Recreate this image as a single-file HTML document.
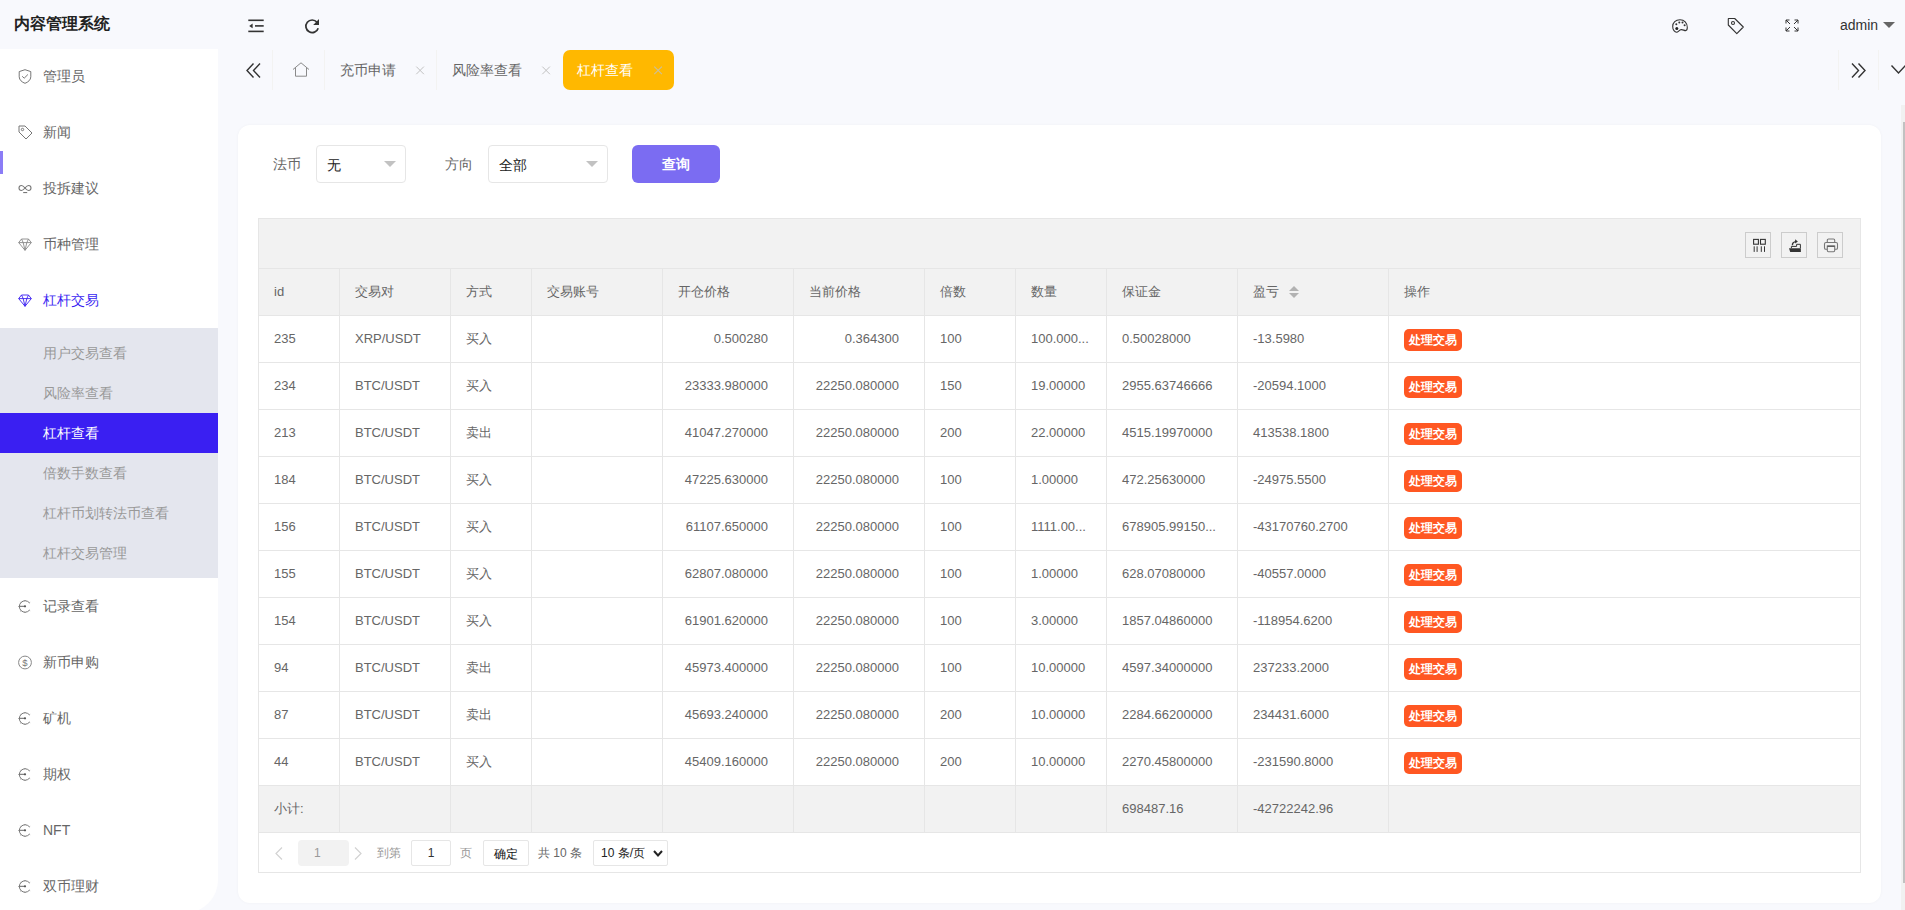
<!DOCTYPE html>
<html><head><meta charset="utf-8">
<style>
*{box-sizing:border-box;margin:0;padding:0}
html,body{width:1905px;height:910px;overflow:hidden}
body{position:relative;background:#f8f9fd;font-family:"Liberation Sans",sans-serif;font-size:14px;color:#333}
.a{position:absolute;white-space:nowrap}
svg{position:absolute;overflow:visible}
.logo{left:14px;top:13px;font-size:16px;font-weight:bold;color:#222;line-height:22px}
.side{left:0;top:49px;width:218px;height:864px;background:#fff;border-bottom-right-radius:33px}
.mi{position:absolute;left:43px;color:#666;font-size:14px;line-height:20px}
.si{position:absolute;left:43px;color:#999;font-size:14px;line-height:20px}
.card{left:238px;top:125px;width:1643px;height:778px;background:#fff;border-radius:12px;box-shadow:0 0 3px rgba(0,0,50,.04)}
.hl{position:absolute;left:258px;width:1603px;height:1px;background:#e6e6e6}
.vl{position:absolute;width:1px;background:#e6e6e6}
.tc{font-size:13px;color:#666;line-height:46px}
.btn{width:58px;height:22px;line-height:22px;background:#ff5722;color:#fff;font-size:12px;font-weight:bold;text-align:center;border-radius:5px}
.tab{position:absolute;top:50px;height:40px;line-height:40px;font-size:14px;color:#666}
.x{position:absolute;top:50px;line-height:40px;font-size:14px;color:#bbb}
.sep{position:absolute;top:50px;width:1px;height:40px;background:#f3f3f2}
.tool{position:absolute;top:232px;width:26px;height:26px;border:1px solid #ccc;background:#f2f2f2}
.pg{font-size:12px;color:#999;line-height:26px}
</style></head><body>
<div class="a logo">内容管理系统</div>

<!-- header icons -->
<svg style="left:248px;top:19px" width="16" height="14" viewBox="0 0 16 14">
 <rect x="0.3" y="0.5" width="15.4" height="1.6" fill="#333"/>
 <rect x="7" y="6.1" width="8.7" height="1.6" fill="#333"/>
 <rect x="0.3" y="11.6" width="15.4" height="1.6" fill="#333"/>
 <path d="M1.2 6.9 L4.6 4.6 L4.6 9.2 Z" fill="#333"/>
</svg>
<svg style="left:304px;top:18px" width="16" height="16" viewBox="0 0 16 16">
 <path d="M14.2 10.2 A6.3 6.3 0 1 1 13 4.2" fill="none" stroke="#333" stroke-width="1.7"/>
 <path d="M15 1 L15 7 L9.2 7 Z" fill="#333"/>
</svg>

<svg style="left:1672px;top:19px" width="16" height="14" viewBox="0 0 16 14">
 <path d="M8 0.8 C3.6 0.8 0.7 3.6 0.7 7.4 C0.7 11 2.8 13.2 4.6 13.2 C6.4 13.2 7 10.7 9.3 10.6 C11.2 10.5 12 11.6 13.6 11.6 C15 11.6 15.3 10.4 15.3 8.6 C15.3 3.8 12.2 0.8 8 0.8 Z" fill="none" stroke="#333" stroke-width="1.1"/>
 <circle cx="4.8" cy="9.6" r="1.5" fill="#222"/>
 <circle cx="4.3" cy="5.3" r="1" fill="#333"/>
 <circle cx="7.3" cy="3.4" r="1" fill="#333"/>
 <circle cx="10.5" cy="3.6" r="1" fill="#333"/>
 <circle cx="12.6" cy="6.3" r="1" fill="#333"/>
</svg>
<svg style="left:1727px;top:17px" width="18" height="18" viewBox="0 0 18 18">
 <path d="M1.5 1.5 H7.7 L16.3 10 L9.8 16.6 L1.3 8 V2 Z" fill="none" stroke="#333" stroke-width="1.1" stroke-linejoin="round"/>
 <circle cx="6" cy="6" r="1.5" fill="none" stroke="#333" stroke-width="1.1"/>
</svg>
<svg style="left:1785px;top:19px" width="14" height="13" viewBox="0 0 14 13">
 <g fill="none" stroke="#333" stroke-width="1">
 <path d="M1 4.5 V1 H4.5 M1 1 L5 5"/>
 <path d="M13 4.5 V1 H9.5 M13 1 L9 5"/>
 <path d="M1 8.5 V12 H4.5 M1 12 L5 8"/>
 <path d="M13 8.5 V12 H9.5 M13 12 L9 8"/>
 </g>
</svg>
<div class="a" style="left:1840px;top:15px;font-size:14px;line-height:20px;color:#333">admin</div>
<div class="a" style="left:1883px;top:22px;width:0;height:0;border-left:6px solid transparent;border-right:6px solid transparent;border-top:6px solid #666"></div>

<!-- sidebar -->
<div class="a side"></div>
<div class="a" style="left:0;top:151px;width:3px;height:23px;background:#8b7cf6"></div>
<div class="mi" style="top:66px">管理员</div>
<div class="mi" style="top:122px">新闻</div>
<div class="mi" style="top:178px">投拆建议</div>
<div class="mi" style="top:234px">币种管理</div>
<div class="mi" style="top:290px;color:#3a1ff2">杠杆交易</div>
<div class="a" style="left:0;top:328px;width:218px;height:250px;background:#e4e6ee"></div>
<div class="a" style="left:0;top:413px;width:218px;height:40px;background:#3a1ff2"></div>
<div class="si" style="top:343px">用户交易查看</div>
<div class="si" style="top:383px">风险率查看</div>
<div class="si" style="top:423px;color:#fff">杠杆查看</div>
<div class="si" style="top:463px">倍数手数查看</div>
<div class="si" style="top:503px">杠杆币划转法币查看</div>
<div class="si" style="top:543px">杠杆交易管理</div>
<div class="mi" style="top:596px">记录查看</div>
<div class="mi" style="top:652px">新币申购</div>
<div class="mi" style="top:708px">矿机</div>
<div class="mi" style="top:764px">期权</div>
<div class="mi" style="top:820px">NFT</div>
<div class="mi" style="top:876px">双币理财</div>
<svg style="left:18px;top:69px" width="14" height="15" viewBox="0 0 14 15">
 <path d="M7 0.7 L12.8 2.6 V7.8 C12.8 11 10 13.2 7 14.3 C4 13.2 1.2 11 1.2 7.8 V2.6 Z" fill="none" stroke="#777" stroke-width="1"/>
 <path d="M4.2 7.3 L6.2 9.2 L9.9 5.5" fill="none" stroke="#777" stroke-width="1"/>
</svg>
<svg style="left:18px;top:125px" width="15" height="15" viewBox="0 0 15 15">
 <path d="M1 1 H7 L14 8 L8 14 L1 7 Z" fill="none" stroke="#777" stroke-width="1" stroke-linejoin="round"/>
 <circle cx="4.5" cy="4.5" r="1.2" fill="none" stroke="#777" stroke-width="1"/>
</svg>
<svg style="left:18px;top:184px" width="14" height="10" viewBox="0 0 14 10">
 <path d="M7 4 C5.5 2.2 4.5 1.5 3.5 1.5 C2 1.5 1 2.5 1 4 C1 5.5 2 6.5 3.5 6.5 C4.5 6.5 5.5 5.8 7 4 C8.5 2.2 9.5 1.5 10.5 1.5 C12 1.5 13 2.5 13 4 C13 5.5 12 6.5 10.5 6.5 C9.5 6.5 8.5 5.8 7 4 Z" fill="none" stroke="#777" stroke-width="1.1"/>
 <rect x="5.2" y="8" width="4" height="1.1" fill="#777"/>
</svg>
<svg style="left:18px;top:238px" width="14" height="13" viewBox="0 0 14 13">
 <path d="M3.5 1 H10.5 L13.3 4.6 L7 12.3 L0.7 4.6 Z M0.7 4.6 H13.3 M3.5 1 L5.2 4.6 L7 12.3 L8.8 4.6 L10.5 1" fill="none" stroke="#888" stroke-width="0.9" stroke-linejoin="round"/>
</svg>
<svg style="left:18px;top:294px" width="14" height="13" viewBox="0 0 14 13">
 <path d="M3.5 1 H10.5 L13.3 4.6 L7 12.3 L0.7 4.6 Z M0.7 4.6 H13.3 M3.5 1 L5.2 4.6 L7 12.3 L8.8 4.6 L10.5 1" fill="none" stroke="#3a1ff2" stroke-width="0.9" stroke-linejoin="round"/>
</svg>
<svg style="left:17px;top:598px" width="16" height="16" viewBox="0 0 16 16">
 <path d="M12.4 4.8 A5.7 5.7 0 1 0 12.4 12.2" fill="none" stroke="#777" stroke-width="1"/>
 <path d="M8 2.8 V2 M4 4.5 L3.4 3.9 M2.3 8.5 H1.5 M4 12.5 L3.4 13.1 M8 14.2 V15 M12.4 4.8 L13.1 4.3 M12.4 12.2 L13.1 12.7" stroke="#777" stroke-width="1"/>
 <path d="M2.3 8.3 H8" fill="none" stroke="#666" stroke-width="1"/>
 <circle cx="8" cy="8.3" r="1.1" fill="#555"/>
</svg>
<svg style="left:17px;top:710px" width="16" height="16" viewBox="0 0 16 16">
 <path d="M12.4 4.8 A5.7 5.7 0 1 0 12.4 12.2" fill="none" stroke="#777" stroke-width="1"/>
 <path d="M8 2.8 V2 M4 4.5 L3.4 3.9 M2.3 8.5 H1.5 M4 12.5 L3.4 13.1 M8 14.2 V15 M12.4 4.8 L13.1 4.3 M12.4 12.2 L13.1 12.7" stroke="#777" stroke-width="1"/>
 <path d="M2.3 8.3 H8" fill="none" stroke="#666" stroke-width="1"/>
 <circle cx="8" cy="8.3" r="1.1" fill="#555"/>
</svg>
<svg style="left:17px;top:766px" width="16" height="16" viewBox="0 0 16 16">
 <path d="M12.4 4.8 A5.7 5.7 0 1 0 12.4 12.2" fill="none" stroke="#777" stroke-width="1"/>
 <path d="M8 2.8 V2 M4 4.5 L3.4 3.9 M2.3 8.5 H1.5 M4 12.5 L3.4 13.1 M8 14.2 V15 M12.4 4.8 L13.1 4.3 M12.4 12.2 L13.1 12.7" stroke="#777" stroke-width="1"/>
 <path d="M2.3 8.3 H8" fill="none" stroke="#666" stroke-width="1"/>
 <circle cx="8" cy="8.3" r="1.1" fill="#555"/>
</svg>
<svg style="left:17px;top:822px" width="16" height="16" viewBox="0 0 16 16">
 <path d="M12.4 4.8 A5.7 5.7 0 1 0 12.4 12.2" fill="none" stroke="#777" stroke-width="1"/>
 <path d="M8 2.8 V2 M4 4.5 L3.4 3.9 M2.3 8.5 H1.5 M4 12.5 L3.4 13.1 M8 14.2 V15 M12.4 4.8 L13.1 4.3 M12.4 12.2 L13.1 12.7" stroke="#777" stroke-width="1"/>
 <path d="M2.3 8.3 H8" fill="none" stroke="#666" stroke-width="1"/>
 <circle cx="8" cy="8.3" r="1.1" fill="#555"/>
</svg>
<svg style="left:17px;top:878px" width="16" height="16" viewBox="0 0 16 16">
 <path d="M12.4 4.8 A5.7 5.7 0 1 0 12.4 12.2" fill="none" stroke="#777" stroke-width="1"/>
 <path d="M8 2.8 V2 M4 4.5 L3.4 3.9 M2.3 8.5 H1.5 M4 12.5 L3.4 13.1 M8 14.2 V15 M12.4 4.8 L13.1 4.3 M12.4 12.2 L13.1 12.7" stroke="#777" stroke-width="1"/>
 <path d="M2.3 8.3 H8" fill="none" stroke="#666" stroke-width="1"/>
 <circle cx="8" cy="8.3" r="1.1" fill="#555"/>
</svg>
<svg style="left:17px;top:654px" width="16" height="16" viewBox="0 0 16 16">
 <circle cx="8" cy="8.5" r="6.4" fill="none" stroke="#888" stroke-width="1"/>
 <text x="8" y="12" font-size="9.5" text-anchor="middle" fill="#777" font-family="Liberation Sans">$</text>
</svg>


<!-- tabs -->
<svg style="left:246px;top:63px" width="15" height="15" viewBox="0 0 15 15">
 <path d="M7.5 0.5 L1 7.5 L7.5 14.5 M14 0.5 L7.5 7.5 L14 14.5" fill="none" stroke="#333" stroke-width="1.4"/>
</svg>
<div class="sep" style="left:272px"></div>
<svg style="left:292px;top:62px" width="18" height="15" viewBox="0 0 18 15">
 <path d="M1 7.5 L9 0.8 L17 7.5 M3.5 5.5 V14.2 H14.5 V5.5" fill="none" stroke="#8a8a8a" stroke-width="1"/>
</svg>
<div class="sep" style="left:324px"></div>
<div class="tab" style="left:340px">充币申请</div>
<svg style="left:416px;top:66px" width="9" height="9" viewBox="0 0 9 9"><path d="M0.3 0.6 L7.9 8.2 M7.9 0.6 L0.3 8.2" stroke="#c2c2c2" stroke-width="1"/></svg>
<div class="sep" style="left:436px"></div>
<div class="tab" style="left:452px">风险率查看</div>
<svg style="left:542px;top:66px" width="9" height="9" viewBox="0 0 9 9"><path d="M0.3 0.6 L7.9 8.2 M7.9 0.6 L0.3 8.2" stroke="#c2c2c2" stroke-width="1"/></svg>
<div class="a" style="left:563px;top:50px;width:111px;height:40px;background:#ffb800;border-radius:7px"></div>
<div class="tab" style="left:577px;color:#fff">杠杆查看</div>
<svg style="left:654px;top:66px" width="9" height="9" viewBox="0 0 9 9"><path d="M0.3 0.6 L7.9 8.2 M7.9 0.6 L0.3 8.2" stroke="#cbbf99" stroke-width="1.1"/></svg>
<div class="sep" style="left:1838px"></div>
<svg style="left:1851px;top:63px" width="15" height="15" viewBox="0 0 15 15">
 <path d="M1 0.5 L7.5 7.5 L1 14.5 M7.5 0.5 L14 7.5 L7.5 14.5" fill="none" stroke="#333" stroke-width="1.4"/>
</svg>
<div class="sep" style="left:1878px"></div>
<svg style="left:1891px;top:65px" width="16" height="9" viewBox="0 0 16 9">
 <path d="M0.5 0.5 L7.5 8 L14.5 0.5" fill="none" stroke="#333" stroke-width="1.4"/>
</svg>

<!-- scrollbar -->
<div class="a" style="left:1901px;top:105px;width:4px;height:805px;background:#f1f1f1"></div>
<div class="a" style="left:1903px;top:122px;width:2px;height:761px;background:#c1c1c1"></div>

<!-- card -->
<div class="a card"></div>
<div class="a" style="left:273px;top:154px;font-size:14px;line-height:20px;color:#666">法币</div>
<div class="a" style="left:316px;top:145px;width:90px;height:38px;border:1px solid #e6e6e6;border-radius:4px;background:#fff"></div>
<div class="a" style="left:327px;top:155px;font-size:14px;line-height:20px;color:#222">无</div>
<div class="a" style="left:384px;top:161px;width:0;height:0;border-left:6px solid transparent;border-right:6px solid transparent;border-top:6px solid #c2c2c2"></div>
<div class="a" style="left:445px;top:154px;font-size:14px;line-height:20px;color:#666">方向</div>
<div class="a" style="left:488px;top:145px;width:120px;height:38px;border:1px solid #e6e6e6;border-radius:4px;background:#fff"></div>
<div class="a" style="left:499px;top:155px;font-size:14px;line-height:20px;color:#222">全部</div>
<div class="a" style="left:586px;top:161px;width:0;height:0;border-left:6px solid transparent;border-right:6px solid transparent;border-top:6px solid #c2c2c2"></div>
<div class="a" style="left:632px;top:145px;width:88px;height:38px;background:#7b6cf2;border-radius:6px;color:#fff;font-weight:bold;font-size:14px;line-height:38px;text-align:center">查询</div>

<div class="a" style="left:258px;top:218px;width:1603px;height:97px;background:#f2f2f2"></div>
<div class="a" style="left:258px;top:785px;width:1603px;height:47px;background:#f2f2f2"></div>
<div class="hl" style="top:218px"></div>
<div class="hl" style="top:268px"></div>
<div class="hl" style="top:315px"></div>
<div class="hl" style="top:362px"></div>
<div class="hl" style="top:409px"></div>
<div class="hl" style="top:456px"></div>
<div class="hl" style="top:503px"></div>
<div class="hl" style="top:550px"></div>
<div class="hl" style="top:597px"></div>
<div class="hl" style="top:644px"></div>
<div class="hl" style="top:691px"></div>
<div class="hl" style="top:738px"></div>
<div class="hl" style="top:785px"></div>
<div class="hl" style="top:832px"></div>
<div class="hl" style="top:872px"></div>
<div class="vl" style="left:258px;top:218px;height:655px"></div>
<div class="vl" style="left:1860px;top:218px;height:655px"></div>
<div class="vl" style="left:339px;top:268px;height:564px"></div>
<div class="vl" style="left:450px;top:268px;height:564px"></div>
<div class="vl" style="left:531px;top:268px;height:564px"></div>
<div class="vl" style="left:662px;top:268px;height:564px"></div>
<div class="vl" style="left:793px;top:268px;height:564px"></div>
<div class="vl" style="left:924px;top:268px;height:564px"></div>
<div class="vl" style="left:1015px;top:268px;height:564px"></div>
<div class="vl" style="left:1106px;top:268px;height:564px"></div>
<div class="vl" style="left:1237px;top:268px;height:564px"></div>
<div class="vl" style="left:1388px;top:268px;height:564px"></div>
<div class="a tc" style="left:274px;top:269px">id</div>
<div class="a tc" style="left:355px;top:269px">交易对</div>
<div class="a tc" style="left:466px;top:269px">方式</div>
<div class="a tc" style="left:547px;top:269px">交易账号</div>
<div class="a tc" style="left:678px;top:269px">开仓价格</div>
<div class="a tc" style="left:809px;top:269px">当前价格</div>
<div class="a tc" style="left:940px;top:269px">倍数</div>
<div class="a tc" style="left:1031px;top:269px">数量</div>
<div class="a tc" style="left:1122px;top:269px">保证金</div>
<div class="a tc" style="left:1253px;top:269px">盈亏</div>
<div class="a tc" style="left:1404px;top:269px">操作</div>
<div class="a" style="left:1289px;top:286px;width:0;height:0;border-left:5px solid transparent;border-right:5px solid transparent;border-bottom:5px solid #b2b2b2"></div>
<div class="a" style="left:1289px;top:293px;width:0;height:0;border-left:5px solid transparent;border-right:5px solid transparent;border-top:5px solid #b2b2b2"></div>
<div class="a tc" style="left:274px;top:316px">235</div>
<div class="a tc" style="left:355px;top:316px">XRP/USDT</div>
<div class="a tc" style="left:466px;top:316px">买入</div>
<div class="a tc" style="right:1137px;top:316px">0.500280</div>
<div class="a tc" style="right:1006px;top:316px">0.364300</div>
<div class="a tc" style="left:940px;top:316px">100</div>
<div class="a tc" style="left:1031px;top:316px">100.000...</div>
<div class="a tc" style="left:1122px;top:316px">0.50028000</div>
<div class="a tc" style="left:1253px;top:316px">-13.5980</div>
<div class="a btn" style="left:1404px;top:329px">处理交易</div>
<div class="a tc" style="left:274px;top:363px">234</div>
<div class="a tc" style="left:355px;top:363px">BTC/USDT</div>
<div class="a tc" style="left:466px;top:363px">买入</div>
<div class="a tc" style="right:1137px;top:363px">23333.980000</div>
<div class="a tc" style="right:1006px;top:363px">22250.080000</div>
<div class="a tc" style="left:940px;top:363px">150</div>
<div class="a tc" style="left:1031px;top:363px">19.00000</div>
<div class="a tc" style="left:1122px;top:363px">2955.63746666</div>
<div class="a tc" style="left:1253px;top:363px">-20594.1000</div>
<div class="a btn" style="left:1404px;top:376px">处理交易</div>
<div class="a tc" style="left:274px;top:410px">213</div>
<div class="a tc" style="left:355px;top:410px">BTC/USDT</div>
<div class="a tc" style="left:466px;top:410px">卖出</div>
<div class="a tc" style="right:1137px;top:410px">41047.270000</div>
<div class="a tc" style="right:1006px;top:410px">22250.080000</div>
<div class="a tc" style="left:940px;top:410px">200</div>
<div class="a tc" style="left:1031px;top:410px">22.00000</div>
<div class="a tc" style="left:1122px;top:410px">4515.19970000</div>
<div class="a tc" style="left:1253px;top:410px">413538.1800</div>
<div class="a btn" style="left:1404px;top:423px">处理交易</div>
<div class="a tc" style="left:274px;top:457px">184</div>
<div class="a tc" style="left:355px;top:457px">BTC/USDT</div>
<div class="a tc" style="left:466px;top:457px">买入</div>
<div class="a tc" style="right:1137px;top:457px">47225.630000</div>
<div class="a tc" style="right:1006px;top:457px">22250.080000</div>
<div class="a tc" style="left:940px;top:457px">100</div>
<div class="a tc" style="left:1031px;top:457px">1.00000</div>
<div class="a tc" style="left:1122px;top:457px">472.25630000</div>
<div class="a tc" style="left:1253px;top:457px">-24975.5500</div>
<div class="a btn" style="left:1404px;top:470px">处理交易</div>
<div class="a tc" style="left:274px;top:504px">156</div>
<div class="a tc" style="left:355px;top:504px">BTC/USDT</div>
<div class="a tc" style="left:466px;top:504px">买入</div>
<div class="a tc" style="right:1137px;top:504px">61107.650000</div>
<div class="a tc" style="right:1006px;top:504px">22250.080000</div>
<div class="a tc" style="left:940px;top:504px">100</div>
<div class="a tc" style="left:1031px;top:504px">1111.00...</div>
<div class="a tc" style="left:1122px;top:504px">678905.99150...</div>
<div class="a tc" style="left:1253px;top:504px">-43170760.2700</div>
<div class="a btn" style="left:1404px;top:517px">处理交易</div>
<div class="a tc" style="left:274px;top:551px">155</div>
<div class="a tc" style="left:355px;top:551px">BTC/USDT</div>
<div class="a tc" style="left:466px;top:551px">买入</div>
<div class="a tc" style="right:1137px;top:551px">62807.080000</div>
<div class="a tc" style="right:1006px;top:551px">22250.080000</div>
<div class="a tc" style="left:940px;top:551px">100</div>
<div class="a tc" style="left:1031px;top:551px">1.00000</div>
<div class="a tc" style="left:1122px;top:551px">628.07080000</div>
<div class="a tc" style="left:1253px;top:551px">-40557.0000</div>
<div class="a btn" style="left:1404px;top:564px">处理交易</div>
<div class="a tc" style="left:274px;top:598px">154</div>
<div class="a tc" style="left:355px;top:598px">BTC/USDT</div>
<div class="a tc" style="left:466px;top:598px">买入</div>
<div class="a tc" style="right:1137px;top:598px">61901.620000</div>
<div class="a tc" style="right:1006px;top:598px">22250.080000</div>
<div class="a tc" style="left:940px;top:598px">100</div>
<div class="a tc" style="left:1031px;top:598px">3.00000</div>
<div class="a tc" style="left:1122px;top:598px">1857.04860000</div>
<div class="a tc" style="left:1253px;top:598px">-118954.6200</div>
<div class="a btn" style="left:1404px;top:611px">处理交易</div>
<div class="a tc" style="left:274px;top:645px">94</div>
<div class="a tc" style="left:355px;top:645px">BTC/USDT</div>
<div class="a tc" style="left:466px;top:645px">卖出</div>
<div class="a tc" style="right:1137px;top:645px">45973.400000</div>
<div class="a tc" style="right:1006px;top:645px">22250.080000</div>
<div class="a tc" style="left:940px;top:645px">100</div>
<div class="a tc" style="left:1031px;top:645px">10.00000</div>
<div class="a tc" style="left:1122px;top:645px">4597.34000000</div>
<div class="a tc" style="left:1253px;top:645px">237233.2000</div>
<div class="a btn" style="left:1404px;top:658px">处理交易</div>
<div class="a tc" style="left:274px;top:692px">87</div>
<div class="a tc" style="left:355px;top:692px">BTC/USDT</div>
<div class="a tc" style="left:466px;top:692px">卖出</div>
<div class="a tc" style="right:1137px;top:692px">45693.240000</div>
<div class="a tc" style="right:1006px;top:692px">22250.080000</div>
<div class="a tc" style="left:940px;top:692px">200</div>
<div class="a tc" style="left:1031px;top:692px">10.00000</div>
<div class="a tc" style="left:1122px;top:692px">2284.66200000</div>
<div class="a tc" style="left:1253px;top:692px">234431.6000</div>
<div class="a btn" style="left:1404px;top:705px">处理交易</div>
<div class="a tc" style="left:274px;top:739px">44</div>
<div class="a tc" style="left:355px;top:739px">BTC/USDT</div>
<div class="a tc" style="left:466px;top:739px">买入</div>
<div class="a tc" style="right:1137px;top:739px">45409.160000</div>
<div class="a tc" style="right:1006px;top:739px">22250.080000</div>
<div class="a tc" style="left:940px;top:739px">200</div>
<div class="a tc" style="left:1031px;top:739px">10.00000</div>
<div class="a tc" style="left:1122px;top:739px">2270.45800000</div>
<div class="a tc" style="left:1253px;top:739px">-231590.8000</div>
<div class="a btn" style="left:1404px;top:752px">处理交易</div>
<div class="a tc" style="left:274px;top:786px">小计:</div>
<div class="a tc" style="left:1122px;top:786px">698487.16</div>
<div class="a tc" style="left:1253px;top:786px">-42722242.96</div>

<!-- toolbar icons -->
<div class="tool" style="left:1745px"></div>
<div class="tool" style="left:1781px"></div>
<div class="tool" style="left:1817px"></div>
<svg style="left:1752px;top:238px" width="14" height="15" viewBox="0 0 14 15">
 <rect x="1.6" y="1.4" width="4.8" height="4.8" fill="none" stroke="#333" stroke-width="1.1"/>
 <rect x="8.5" y="1.4" width="4.8" height="4.8" fill="none" stroke="#333" stroke-width="1.1"/>
 <path d="M2.2 8.3 V13.9 M5.1 8.3 V13.9 M9.3 8.3 V13.9 M12.5 8.3 V13.9" stroke="#333" stroke-width="1"/>
</svg>
<svg style="left:1788px;top:239px" width="14" height="14" viewBox="0 0 14 14">
 <path d="M1 9.2 H12.9 V13 H2.2 Z" fill="#333"/>
 <path d="M3.4 9.2 V7.4 H8.6 V5.3 H12.4 V9.2" fill="none" stroke="#333" stroke-width="1"/>
 <path d="M4.4 6.2 C4.4 4.2 5.6 2.8 8 2.6" fill="none" stroke="#333" stroke-width="1.4"/>
 <path d="M7.1 0.2 L9.9 2.5 L7.1 4.4 Z" fill="#333"/>
</svg>
<svg style="left:1823px;top:238px" width="16" height="15" viewBox="0 0 16 15">
 <path d="M4.3 4.5 V2.2 C4.3 1.5 4.8 1 5.5 1 H10.5 C11.2 1 11.7 1.5 11.7 2.2 V4.5" fill="none" stroke="#777" stroke-width="1.1"/>
 <path d="M4 11.2 H2.8 C2 11.2 1.5 10.6 1.5 9.9 V6 C1.5 5.1 2.1 4.5 3 4.5 H13 C13.9 4.5 14.5 5.1 14.5 6 V9.9 C14.5 10.6 14 11.2 13.2 11.2 H12" fill="none" stroke="#777" stroke-width="1.1"/>
 <path d="M4.3 8 H11.7 V12.6 C11.7 13.3 11.2 13.8 10.5 13.8 H5.5 C4.8 13.8 4.3 13.3 4.3 12.6 Z" fill="none" stroke="#777" stroke-width="1.1"/>
 <rect x="4.3" y="7.6" width="7.4" height="1.3" fill="#555"/>
</svg>


<!-- pagination -->
<svg style="left:275px;top:847px" width="8" height="13" viewBox="0 0 8 13"><path d="M7 0.5 L1 6.5 L7 12.5" fill="none" stroke="#d2d2d2" stroke-width="1.2"/></svg>
<div class="a" style="left:298px;top:840px;width:51px;height:26px;background:#f2f2f2;border-radius:4px"></div><div class="a" style="left:314px;top:840px;font-size:12px;line-height:26px;color:#999">1</div>
<svg style="left:354px;top:847px" width="8" height="13" viewBox="0 0 8 13"><path d="M1 0.5 L7 6.5 L1 12.5" fill="none" stroke="#d2d2d2" stroke-width="1.2"/></svg>
<div class="a pg" style="left:377px;top:840px">到第</div>
<div class="a" style="left:411px;top:840px;width:40px;height:26px;border:1px solid #e6e6e6;border-radius:2px;text-align:center;font-size:12px;line-height:24px;color:#333">1</div>
<div class="a pg" style="left:460px;top:840px">页</div>
<div class="a" style="left:483px;top:840px;width:46px;height:26px;border:1px solid #e6e6e6;border-radius:2px;text-align:center;font-size:12px;line-height:26px;color:#111">确定</div>
<div class="a pg" style="left:538px;top:840px;color:#666">共 10 条</div>
<div class="a" style="left:593px;top:840px;width:75px;height:26px;border:1px solid #e6e6e6;border-radius:2px"></div>
<div class="a pg" style="left:601px;top:840px;color:#222">10 条/页</div>
<svg style="left:653px;top:850px" width="10" height="7" viewBox="0 0 10 7"><path d="M1 1 L5 5.5 L9 1" fill="none" stroke="#222" stroke-width="2"/></svg>
</body></html>
